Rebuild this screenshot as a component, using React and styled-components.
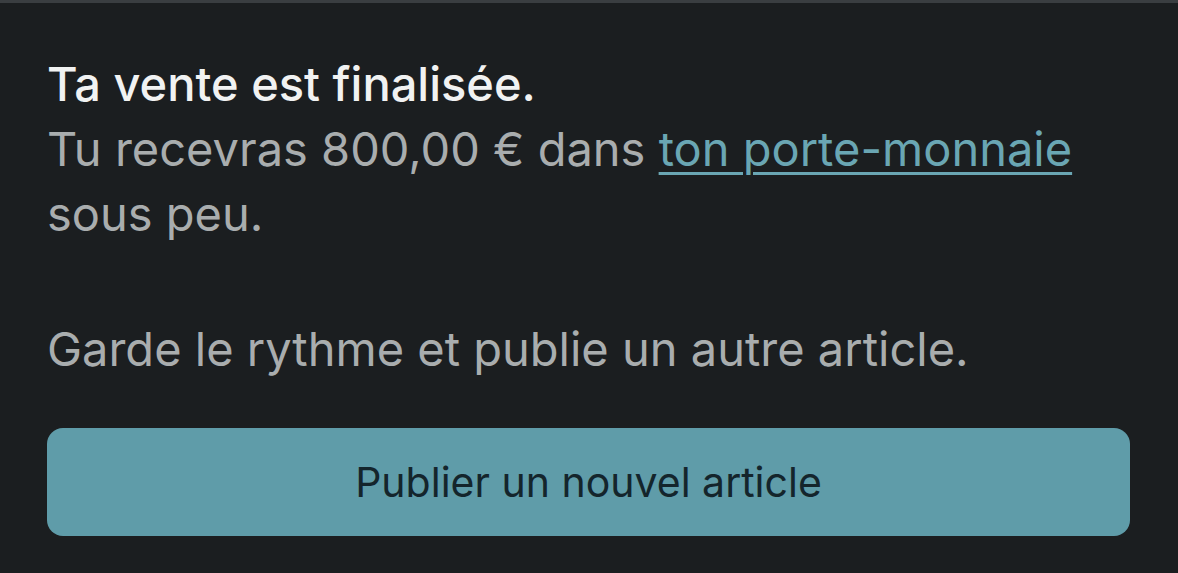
import React from 'react';
import styled, { createGlobalStyle } from 'styled-components';

const GlobalStyle = createGlobalStyle`
  html, body {
    margin: 0;
    padding: 0;
    background-color: #1b1e20;
  }
  body {
    font-family: 'Inter', 'Noto Sans', sans-serif;
    -webkit-font-smoothing: antialiased;
  }
`;

const Sheet = styled.section`
  min-height: 573px;
  box-sizing: border-box;
  border-top: 3px solid #3a3e41;
  padding: 48px 48px 0 47px;
  background-color: #1b1e20;
`;

const Message = styled.div`
  font-size: 47px;
  line-height: 65px;
  color: #a9adae;
`;

const Title = styled.h2`
  margin: 0;
  font-size: 47px;
  line-height: 65px;
  font-weight: 500;
  color: #f1f2f2;
`;

const Line = styled.p`
  margin: 0 0 ${({ $gap }) => $gap || 0}px;
`;

const WalletLink = styled.a`
  color: #6aa6b3;
  text-decoration: underline;
  text-decoration-thickness: 3px;
  text-underline-offset: 6px;
`;

const PublishButton = styled.button`
  display: flex;
  align-items: center;
  justify-content: center;
  width: 100%;
  height: 108px;
  margin-top: 47px;
  border: none;
  border-radius: 16px;
  background-color: #5f9ca9;
  color: #14252c;
  font-family: 'Inter', 'Noto Sans', sans-serif;
  font-size: 41px;
  cursor: pointer;
`;

const App = () => {
  return (
    <>
      <GlobalStyle />
      <Sheet>
        <Message>
          <Title>Ta vente est finalisée.</Title>
          <Line $gap={70}>
            Tu recevras 800,00 € dans <WalletLink href="#">ton porte-monnaie</WalletLink> sous peu.
          </Line>
          <Line>Garde le rythme et publie un autre article.</Line>
        </Message>
        <PublishButton type="button">Publier un nouvel article</PublishButton>
      </Sheet>
    </>
  );
};

export default App;
